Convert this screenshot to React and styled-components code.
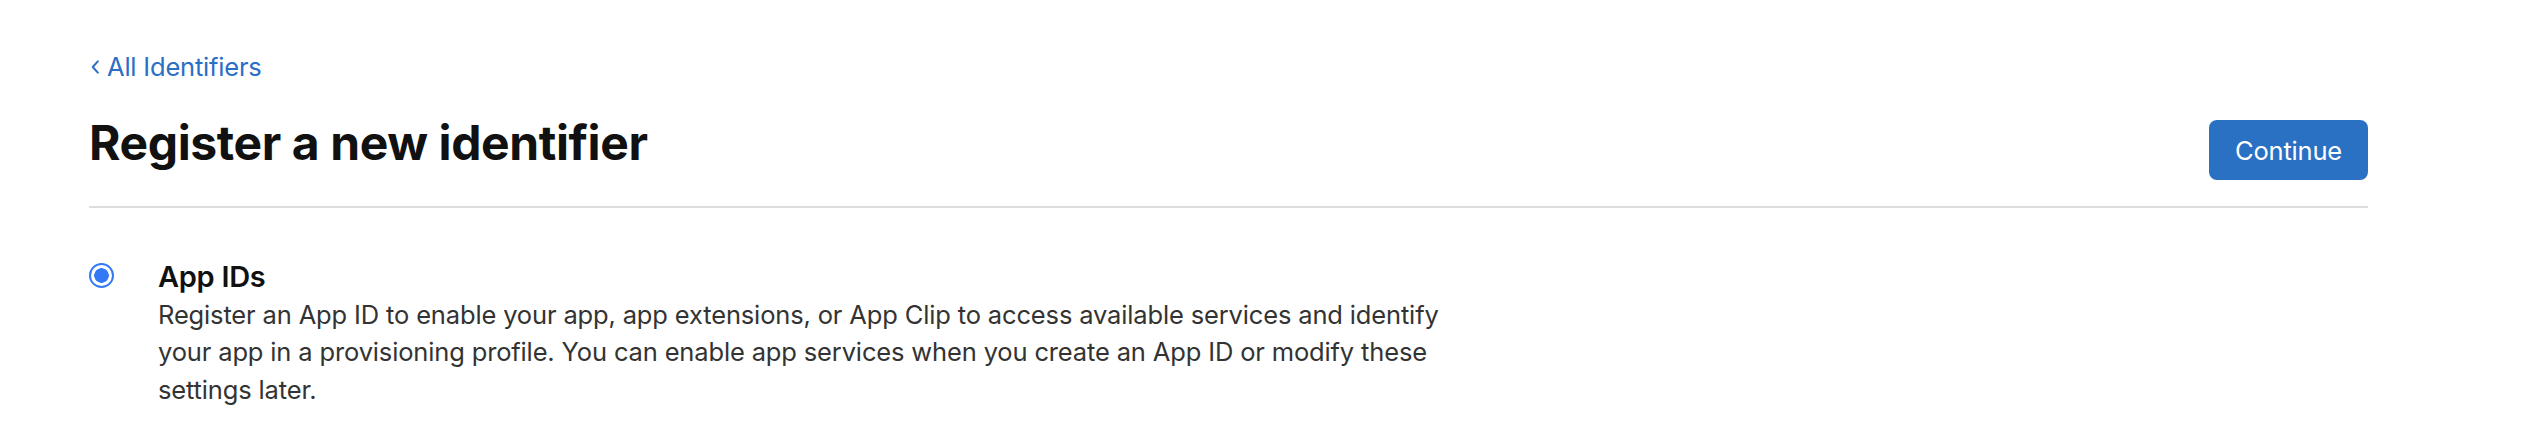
import styled, { createGlobalStyle } from "styled-components";

const GlobalStyle = createGlobalStyle`
  body {
    margin: 0;
    background: #ffffff;
    font-family: Inter, "Noto Sans", sans-serif;
    -webkit-font-smoothing: antialiased;
  }
`;

function App() {
  return (
    <>
      <GlobalStyle />
      <Page>
        <BackLink href="#">
          <Chevron viewBox="0 0 10 16" aria-hidden="true">
            <path d="M7.5 3 L3 8 L7.5 13" />
          </Chevron>
          All Identifiers
        </BackLink>
        <Header>
          <Title>Register a new identifier</Title>
          <ContinueBtn>Continue</ContinueBtn>
        </Header>
        <Option>
          <Radio type="radio" name="identifier" defaultChecked />
          <OptionText>
            <OptionTitle>App IDs</OptionTitle>
            <OptionDesc>
              Register an App ID to enable your app, app extensions, or App Clip to access available
              services and identify your app in a provisioning profile. You can enable app services
              when you create an App ID or modify these settings later.
            </OptionDesc>
          </OptionText>
        </Option>
      </Page>
    </>
  );
}

const Page = styled.div`
  width: 2279px;
  margin-left: 89px;
  padding-top: 48px;
`;

const BackLink = styled.a`
  display: inline-flex;
  align-items: center;
  gap: 6px;
  font-size: 25.5px;
  line-height: 37px;
  color: #2b6ec6;
  text-decoration: none;
  letter-spacing: -0.2px;
`;

const Chevron = styled.svg`
  width: 12px;
  height: 18px;
  fill: none;
  stroke: #2b6ec6;
  stroke-width: 1.8;
  stroke-linecap: round;
  stroke-linejoin: round;
`;

const Header = styled.div`
  display: flex;
  justify-content: space-between;
  align-items: center;
  margin-top: 21px;
  padding-bottom: 26px;
  border-bottom: 2px solid #dddddd;
`;

const Title = styled.h1`
  margin: 0;
  font-size: 48px;
  font-weight: 700;
  line-height: 56px;
  color: #111111;
  letter-spacing: -0.4px;
`;

const ContinueBtn = styled.button`
  width: 159px;
  height: 60px;
  margin-top: 14px;
  border: none;
  border-radius: 8px;
  background: #2a70c3;
  color: #ffffff;
  font-family: inherit;
  font-size: 25.5px;
  letter-spacing: -0.2px;
  cursor: pointer;
`;

const Option = styled.div`
  display: flex;
  align-items: flex-start;
  gap: 44px;
  margin-top: 53px;
`;

const Radio = styled.input`
  appearance: none;
  flex: none;
  width: 25px;
  height: 25px;
  margin: 2px 0 0;
  border-radius: 50%;
  border: 2px solid #3478f6;
  background: radial-gradient(circle, #3478f6 0 7px, #ffffff 7.5px);
`;

const OptionText = styled.div`
  display: flex;
  flex-direction: column;
  width: 1300px;
`;

const OptionTitle = styled.span`
  font-size: 29px;
  font-weight: 600;
  line-height: 32px;
  color: #111111;
  letter-spacing: -0.3px;
`;

const OptionDesc = styled.p`
  margin: 3px 0 0;
  font-size: 25.5px;
  line-height: 37.3px;
  color: #333333;
  letter-spacing: -0.15px;
`;

export default App;
